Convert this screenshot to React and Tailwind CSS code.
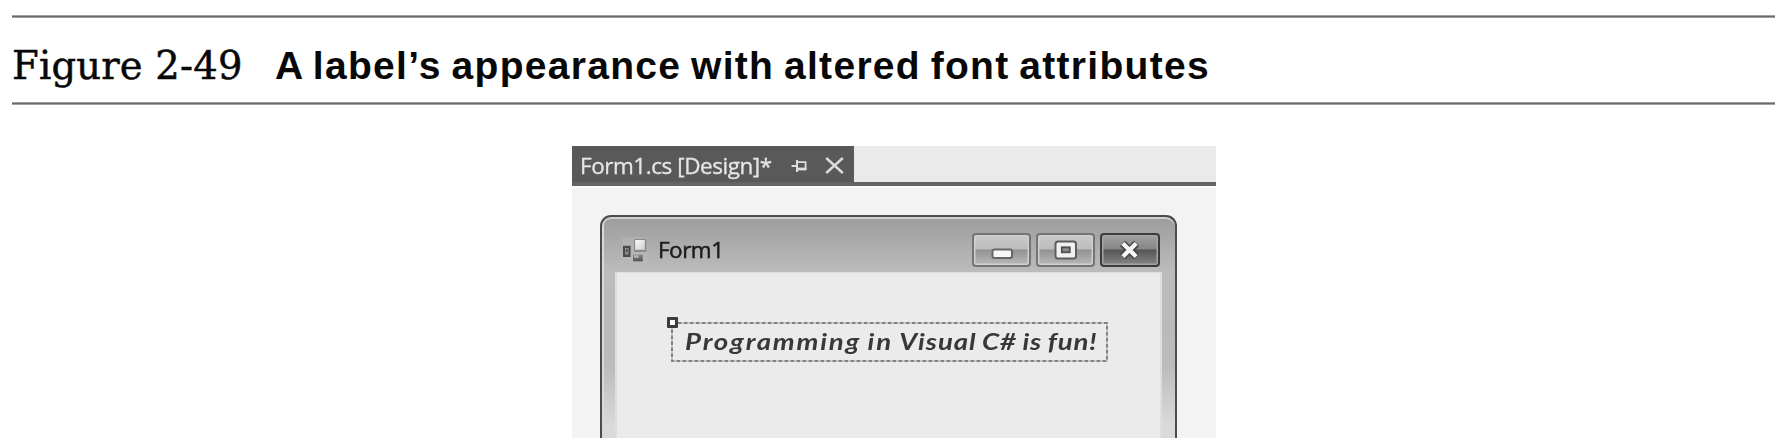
function AppIcon() {
  return (
    <svg className="block h-[26px] w-[26px] shrink-0" viewBox="0 0 26 26">
      <defs>
        <linearGradient id="paneLight" x1="0" y1="0" x2="1" y2="1">
          <stop offset="0" stopColor="#fafafa" />
          <stop offset="1" stopColor="#cfcfcf" />
        </linearGradient>
        <linearGradient id="paneDark" x1="0" y1="0" x2="0" y2="1">
          <stop offset="0" stopColor="#8a8a8a" />
          <stop offset="1" stopColor="#505050" />
        </linearGradient>
      </defs>
      <rect x="0.5" y="0.5" width="25" height="25" fill="#bcbcbc" opacity="0.45" />
      <rect x="12" y="2" width="12.5" height="13" fill="#8a8a8a" />
      <rect x="13.2" y="3" width="9.6" height="9.8" fill="url(#paneLight)" />
      <rect x="1" y="8.8" width="7.6" height="11.2" fill="#4a4a4a" />
      <rect x="3" y="11" width="3.6" height="6.6" fill="#8e8e8e" />
      <rect x="4" y="12" width="1.6" height="3" fill="#4a4a4a" />
      <rect x="11" y="17.5" width="9.8" height="6.8" fill="url(#paneDark)" />
      <rect x="12" y="18.2" width="4.5" height="2.6" fill="#b5b5b5" />
    </svg>
  );
}

function PinIcon() {
  return (
    <svg className="block h-[14px] w-[18px]" viewBox="0 0 18 14" fill="none" stroke="#dedede">
      <path d="M0.5 7H6" strokeWidth="2" />
      <path d="M6 1V13" strokeWidth="2" />
      <path d="M6 3.2H14.6V10.4" strokeWidth="1.8" />
      <path d="M6 10H15.5" strokeWidth="2.8" />
    </svg>
  );
}

function CloseIcon() {
  return (
    <svg className="block h-[17px] w-[19px]" viewBox="0 0 19 17" fill="none" stroke="#dcdcdc" strokeWidth="2.4">
      <path d="M1.2 1L17.8 16M17.8 1L1.2 16" />
    </svg>
  );
}

function MinimizeGlyph() {
  return (
    <svg className="block h-[30px] w-[54px]" viewBox="0 0 54 30">
      <rect x="17.5" y="14.5" width="19.5" height="8.5" rx="2" fill="#f6f6f6" stroke="#666" strokeWidth="2" />
    </svg>
  );
}

function MaximizeGlyph() {
  return (
    <svg className="block h-[30px] w-[54px]" viewBox="0 0 54 30">
      <rect x="16.5" y="6.5" width="20.5" height="17" rx="2.5" fill="#f1f1f1" stroke="#5c5c5c" strokeWidth="2" />
      <rect x="22.8" y="12.3" width="8" height="5" fill="#8a8a8a" stroke="#505050" strokeWidth="1.8" />
    </svg>
  );
}

function CloseGlyph() {
  return (
    <svg className="block h-[30px] w-[54px]" viewBox="0 0 54 30" fill="none">
      <path d="M19.5 8.5L33.5 21.5M33.5 8.5L19.5 21.5" stroke="#484848" strokeWidth="7.5" />
      <path d="M19.9 8.5L33.1 21.5M33.1 8.5L19.9 21.5" stroke="#f8f8f8" strokeWidth="4.2" />
    </svg>
  );
}

const lightButton =
  "flex h-[34px] w-[59px] items-center justify-center rounded-[4px] border-2 border-[#747474] bg-[linear-gradient(#c9c9c9_0%,#bdbdbd_46%,#929292_50%,#b9b9b9_100%)] shadow-[inset_0_0_0_1.5px_#d0d0d0]";
const darkButton =
  "flex h-[34px] w-[60px] items-center justify-center rounded-[4px] border-2 border-[#3c3c3c] bg-[linear-gradient(#a2a2a2_0%,#868686_46%,#555555_50%,#858585_100%)] shadow-[inset_0_0_0_1.5px_#a4a4a4]";

export default function App() {
  return (
    <div className="flex h-[444px] w-[1780px] flex-col overflow-hidden bg-white pt-[15px]">
      <header className="ml-3 flex h-[90px] w-[1763px] flex-col justify-between">
        <div className="h-[3px] border-y border-[#a0a0a0] bg-[#696969]" />
        <div className="flex h-[84px] items-baseline whitespace-nowrap pt-[22px] leading-[52px] text-[#080808]">
          <div className="w-[263px] font-['DejaVu_Serif',serif] text-[38.5px] tracking-[0.2px] [-webkit-text-stroke:0.5px_#080808]">
            Figure 2-49
          </div>
          <h1 className="font-['Liberation_Sans',Arial,sans-serif] text-[39px] font-bold tracking-[1.3px] [word-spacing:-2.4px]">
            A label’s appearance with altered font attributes
          </h1>
        </div>
        <div className="h-[3px] border-y border-[#a0a0a0] bg-[#696969]" />
      </header>

      <main className="ml-[572px] mt-[41px] flex h-[292px] w-[644px] flex-col overflow-hidden bg-[#f3f3f3] blur-[0.6px]">
        <div className="flex h-[40px] shrink-0 border-b-4 border-[#646464] bg-[#eaeaea]">
          <div className="flex h-[36px] w-[282px] items-center bg-[#595959] pl-[8px] pt-[3px]">
            <span className="w-[211px] whitespace-nowrap font-['Open_Sans','Noto_Sans',sans-serif] text-[22.5px] leading-[33px] tracking-[-0.45px] text-[#e6e6e6] [-webkit-text-stroke:0.3px_#e6e6e6]">
              Form1.cs [Design]*
            </span>
            <PinIcon />
            <span className="ml-[16px]">
              <CloseIcon />
            </span>
          </div>
        </div>
        <div className="h-[2px] shrink-0 bg-[#fcfcfc]" />

        <section className="ml-[28px] mt-[27px] flex h-[240px] w-[577px] shrink-0 flex-col rounded-t-[11px] border-x-[2.5px] border-t-2 border-[#4c4c4c] bg-[linear-gradient(#9c9c9c_0px,#bcbcbc_55px,#bababa_110px,#bcbcbc_150px,#dadada_210px)] shadow-[inset_0_2px_0_#d0d0d0,inset_2px_0_0_#d8d8d8]">
          <div className="flex h-[55px] shrink-0 items-center pl-[20px] pr-[15px] pt-[10px]">
            <AppIcon />
            <span className="ml-[10px] grow pt-[1px] font-['Open_Sans','Noto_Sans',sans-serif] text-[22.5px] leading-[30px] tracking-[-0.5px] text-[#1c1c1c] [-webkit-text-stroke:0.5px_#1c1c1c]">
              Form1
            </span>
            <div className="flex gap-[5px]">
              <div className={lightButton}>
                <MinimizeGlyph />
              </div>
              <div className={lightButton}>
                <MaximizeGlyph />
              </div>
              <div className={darkButton}>
                <CloseGlyph />
              </div>
            </div>
          </div>
          <div className="mx-[13px] grow border-x-2 border-t border-[#dedede] bg-[#ebebeb] pl-[54px] pt-[49px]">
            <div className="relative h-[40px] w-[437px]">
              <svg className="block h-[40px] w-[437px]" viewBox="0 0 437 40" fill="none">
                <rect x="1" y="1" width="435" height="38" stroke="#c8c8c8" strokeWidth="2" />
                <rect x="1" y="1" width="435" height="38" stroke="#828282" strokeWidth="2" strokeDasharray="3.4 2.6" />
              </svg>
              <div className="absolute -left-[4px] -top-[5px] h-[11px] w-[11px] rounded-[1px] border-[3px] border-[#3c3c3c] bg-white" />
              <div className="absolute left-[14px] top-[3px] origin-left scale-x-120 whitespace-nowrap font-['Lato',sans-serif] text-[23px] font-bold italic leading-[32px] tracking-[0.75px] [word-spacing:-1.2px] text-[#383838]">
                <span className="tracking-[1.5px]">Programming in </span>
                Visual C# is fun!
              </div>
            </div>
          </div>
        </section>
      </main>
    </div>
  );
}
